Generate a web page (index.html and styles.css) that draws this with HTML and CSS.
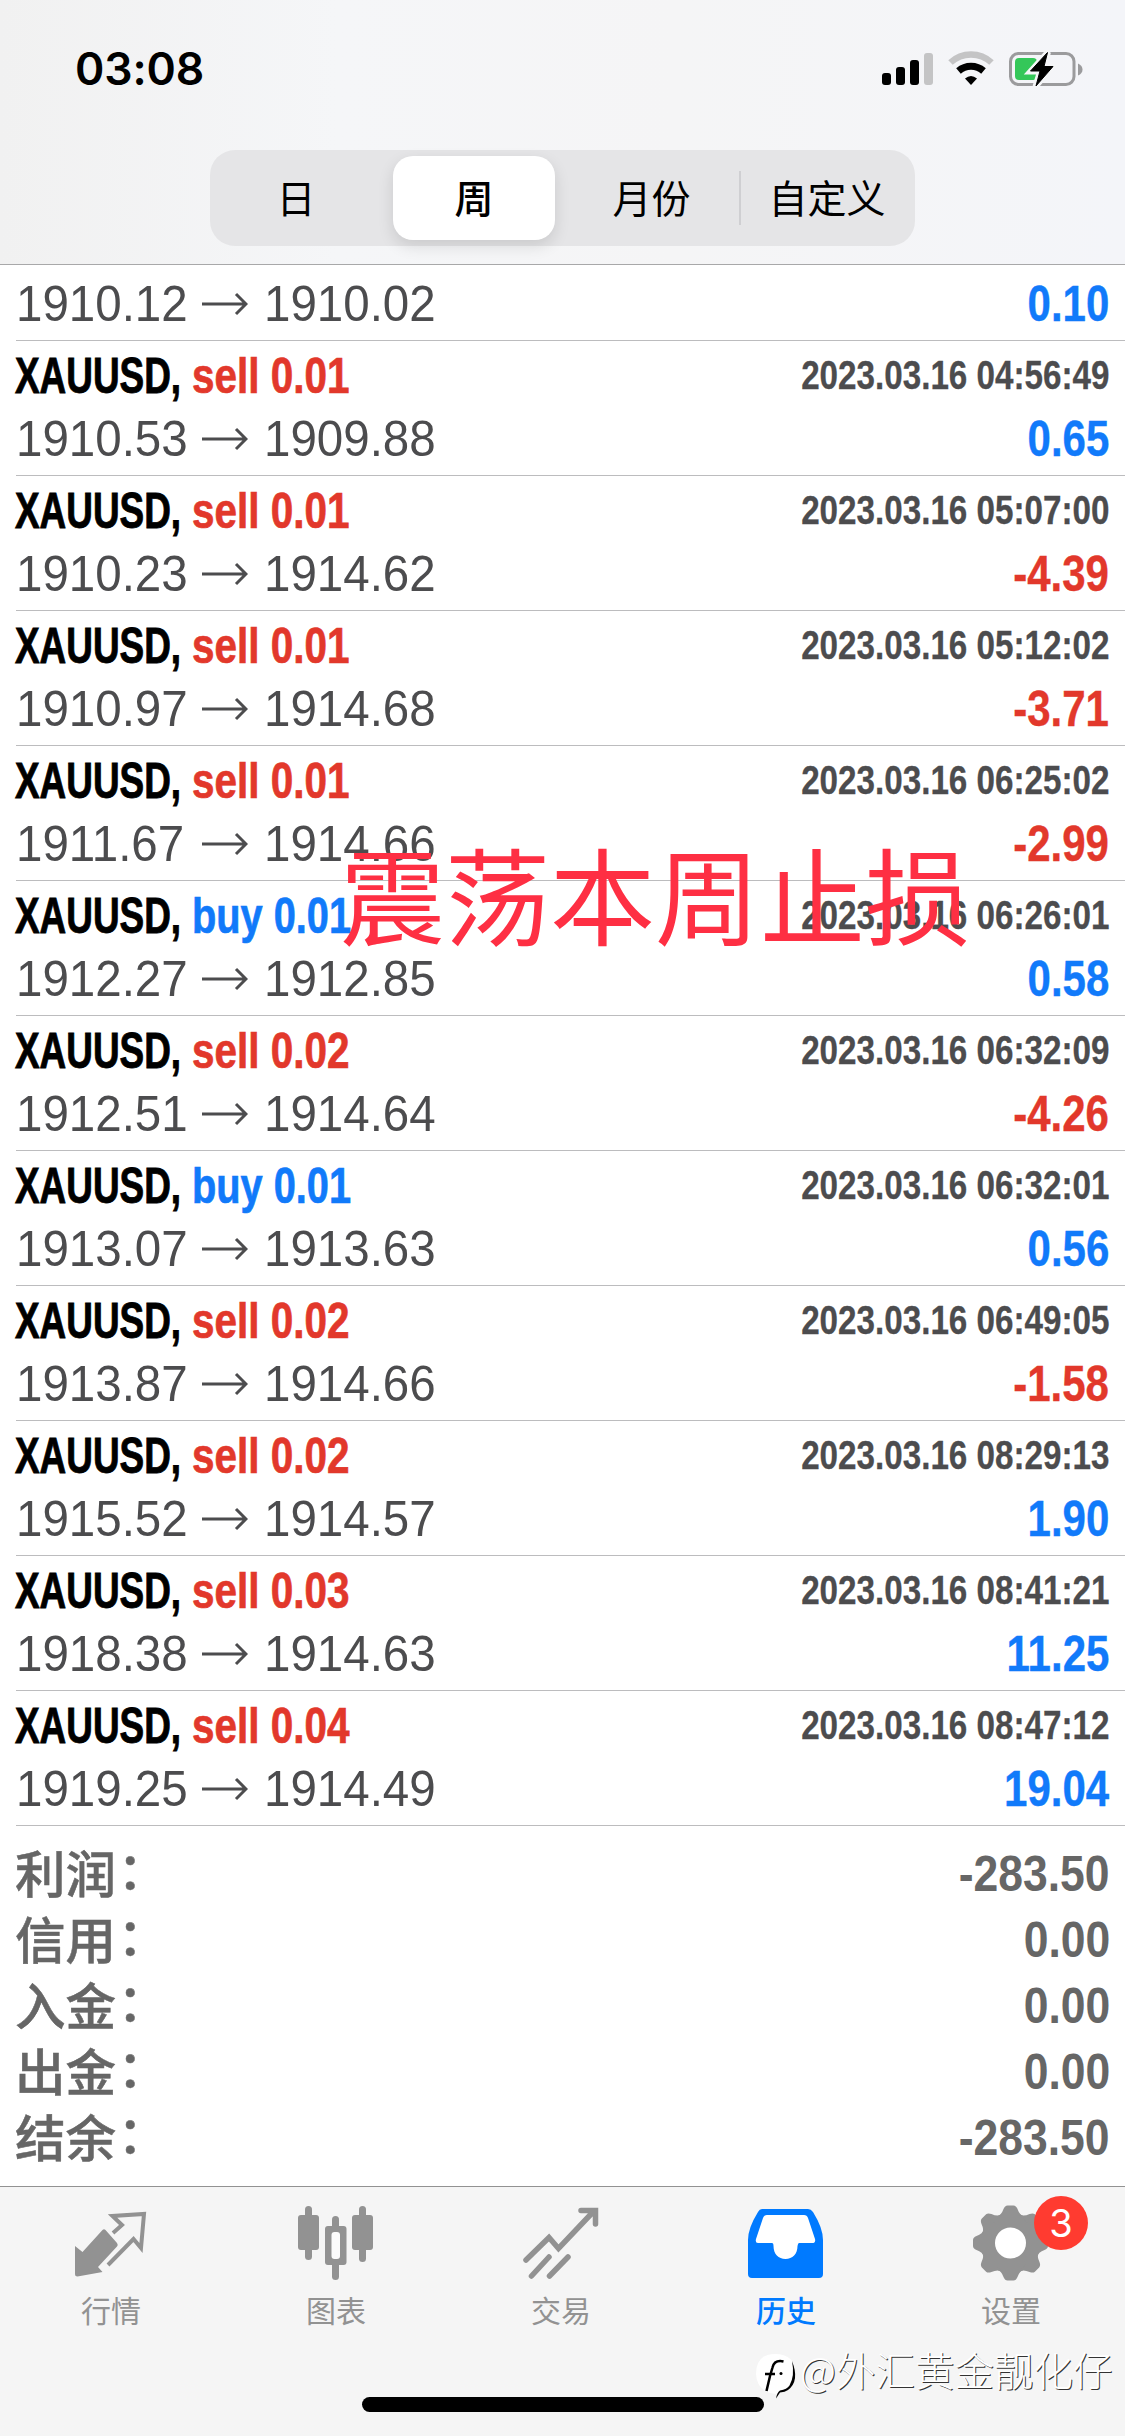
FILE: index.html
```
<!DOCTYPE html>
<html lang="zh-CN">
<head>
<meta charset="utf-8">
<title>历史</title>
<link rel="stylesheet" href="styles.css">
</head>
<body>
<div class="screen">
  <header class="header">
    <div class="status">
      <span class="clock">03:08</span>
      <svg class="indicators" width="206" height="40" viewBox="0 0 206 40">
        <rect x="2" y="23" width="9" height="12" rx="3"/>
        <rect x="16" y="17" width="9" height="18" rx="3"/>
        <rect x="30" y="10" width="9" height="25" rx="3"/>
        <rect x="44" y="3" width="9" height="32" rx="3" fill="#c4c4c5"/>
        <path d="M70.5 12.5a30 30 0 0 1 41 0" fill="none" stroke="#c4c4c5" stroke-width="6.5"/>
        <path d="M78.500 21a19 19 0 0 1 25 0" fill="none" stroke="#000" stroke-width="7"/>
        <path d="M85 28.500q6-5 12 0l-6 6.500z"/>
        <rect x="130.500" y="3.500" width="63.500" height="31" rx="8" fill="none" stroke="#9b9b9d" stroke-width="3"/>
        <rect x="135" y="8" width="22" height="22" rx="4" fill="#34c759"/>
        <path d="M198 13.500q4.500 2 4.500 6t-4.500 6z" fill="#9b9b9d"/>
        <path d="M168 2l-17.500 19.500h9.500l-4.500 15 17.500-20h-9z" stroke="#f5f6f8" stroke-width="6"/>
        <path d="M167.500 2.500l-17 18.500h9.500l-4 15 17-19.500h-9z" stroke="#000"/>
      </svg>
    </div>
    <nav class="segments">
      <span class="segment day">日</span>
      <span class="segment active">周</span>
      <span class="segment month">月份</span>
      <span class="segment divided">自定义</span>
    </nav>
  </header>

  <main class="history">
    <ul class="deals" id="deals"></ul>
    <dl class="totals">
      <div><dt>利润<i>：</i></dt><dd>-283.50</dd></div>
      <div><dt>信用<i>：</i></dt><dd>0.00</dd></div>
      <div><dt>入金<i>：</i></dt><dd>0.00</dd></div>
      <div><dt>出金<i>：</i></dt><dd>0.00</dd></div>
      <div><dt>结余<i>：</i></dt><dd>-283.50</dd></div>
    </dl>
    <div class="caption">震荡本周止损</div>
  </main>

  <footer class="tabbar">
    <div class="tab">
      <svg width="80" height="80" viewBox="0 0 80 80">
        <path d="M31.500 28q1.500-1.500 3 0L46 41q1.500 2 0 3.500L27 65l4.500 5-25 4.500q-2.500 0-2.500-2.500V44l7.500 6z"/>
        <path d="M42 31l9-8-9.500-9L73 12l-3 34-7.500-9L37 63" fill="none" stroke="#929292" stroke-width="4"/>
      </svg>
      <span>行情</span>
    </div>
    <div class="tab">
      <svg width="80" height="80" viewBox="0 0 80 80">
        <rect x="2" y="13" width="21" height="35" rx="3"/><rect x="9" y="4" width="7" height="54" rx="3.500"/>
        <rect x="56" y="13" width="21" height="35" rx="3"/><rect x="63" y="4" width="7" height="56" rx="3.500"/>
        <rect x="36" y="14" width="7" height="64" rx="3.500"/><rect x="29" y="24" width="21.500" height="39" rx="3"/>
        <rect x="35.500" y="30" width="8.500" height="27" rx="3" fill="#fbfbfb"/>
      </svg>
      <span>图表</span>
    </div>
    <div class="tab">
      <svg width="80" height="80" viewBox="0 0 80 80">
        <path d="M5 58l23-22.500 9.500 11L72 10M60 8.500h14.500V22M10.500 74L28 55M28.500 74L47 55" fill="none" stroke="#929292" stroke-width="5.500" stroke-linecap="round"/>
      </svg>
      <span>交易</span>
    </div>
    <div class="tab current">
      <svg width="80" height="80" viewBox="0 0 80 80">
        <path d="M16 7h46q3 0 5 3 10 16 10 28v34q0 4-4 4H6q-4 0-4-4V38Q2 26 12 10q1.500-3 4-3z"/>
        <path d="M21 13h37q3 0 4 3l7 21q1 4-3 4H53q-1 0-1.500 3c0 8-5 13-12 13s-12-5-12-13q0-3-1.500-3H12q-3 0-2-4l7-21q1-3 4-3z" fill="#fff"/>
      </svg>
      <span>历史</span>
    </div>
    <div class="tab">
      <svg width="80" height="80" viewBox="0 0 80 80">
        <g transform="translate(39.500 41)">
          <circle r="30"/>
          <path id="tooth" d="M-14-26Q-9-28-7-34q1.500-3.500 4-3.500h6q2.500 0 4 3.500 2 6 7 8z"/>
          <use href="#tooth" transform="rotate(45)"/><use href="#tooth" transform="rotate(90)"/><use href="#tooth" transform="rotate(135)"/><use href="#tooth" transform="rotate(180)"/><use href="#tooth" transform="rotate(225)"/><use href="#tooth" transform="rotate(270)"/><use href="#tooth" transform="rotate(315)"/>
          <circle r="15.500" fill="#fff"/>
        </g>
      </svg>
      <b class="badge">3</b>
      <span>设置</span>
    </div>
    <div class="home"></div>
    <div class="credit">
      <svg width="46" height="50" viewBox="0 0 46 50">
        <path d="M20 2q20 0 20 19 0 16-19 21-19-2-20-20Q1 2 20 2z" fill="#fff"/>
        <path d="M37 9q8 20-4 29-3 2-8 2.500l-4 6q1-6 4-8 7-1 9.500-5Q40 24 37 9z" fill="#000"/>
        <path d="M28.500 9.500q-9-2-11 6L15 24l-3.500 15M10 22h10" fill="none" stroke="#000" stroke-width="2.500"/>
        <circle cx="26" cy="21.500" r="1.500"/>
      </svg>
      <span>@外汇黄金靓化仔</span>
    </div>
  </footer>
</div>
<script src="deals.js"></script>
</body>
</html>
```
FILE: styles.css
```
* { box-sizing: border-box; }
body {
  margin: 0;
  background: #fff;
  font-family: "Liberation Sans", "Noto Sans CJK SC", sans-serif;
}
.screen {
  width: 1125px;
  height: 2436px;
  display: flex;
  flex-direction: column;
  overflow: hidden;
  position: relative;
}

/* Header */
.header {
  height: 265px;
  flex: none;
  background: linear-gradient(90deg, #f1f1f1, #f5f6f8 30%, #f5f5f6 60%, #f4f5f9);
  border-bottom: 1px solid #a8a8a9;
}
.status {
  height: 150px;
  display: flex;
  justify-content: space-between;
  padding: 50px 39px 0 75px;
}
.clock {
  font: 600 44.500px/38px Inter, sans-serif;
  letter-spacing: -0.1px;
}
.segments {
  width: 705px;
  height: 96px;
  margin-left: 210px;
  padding: 6px;
  display: grid;
  grid-template-columns: 177px 162px 184px 1fr;
  border-radius: 25px;
  background: #e5e5e7;
}
.segment {
  display: flex;
  align-items: center;
  justify-content: center;
  font: 400 39px/1 "Noto Sans CJK SC", sans-serif;
  color: #000;
  position: relative;
  padding-bottom: 3px;
}
.segment.day { padding-right: 17px; }
.segment.month { padding-left: 9px; }
.segment.divided { padding-left: 6px; }
.segment.active {
  background: #fff;
  border-radius: 20px;
  font-weight: 500;
  box-shadow: 0 6px 16px rgba(0, 0, 0, .12);
}
.segment.divided::before {
  content: "";
  position: absolute;
  left: 0;
  top: 15px;
  width: 2px;
  height: 54px;
  background: #cfcfd2;
}

/* Deals */
.history { flex: none; height: 1921px; position: relative; }
.deals { list-style: none; margin: 0 0 0 16px; padding: 0; }
.deal {
  height: 135px;
  border-bottom: 1px solid #bcbcbe;
  padding-top: 3px;
}
.deal.partial { height: 76px; padding-top: 7px; }
.line {
  display: flex;
  height: 64px;
  align-items: center;
  line-height: 64px;
  white-space: nowrap;
  padding-right: 16px;
}
.line + .line { margin-top: -1px; }
.line > * { transform-origin: 0 50%; }
.symbol, .side { font-size: 50px; font-weight: 700; height: 64px; }
.symbol { width: 177px; margin-left: -1px; transform: scaleX(.738); -webkit-text-stroke: .9px currentColor; }
.side { transform: scaleX(.81); -webkit-text-stroke: .7px currentColor; }
.side.blue { transform: scaleX(.795); }
.time {
  margin-left: auto;
  padding-bottom: 2px;
  font-size: 40px;
  font-weight: 700;
  color: #4c4c4e;
  transform: scaleX(.83);
  -webkit-text-stroke: .3px currentColor;
}
.line > .time, .line > .result { transform-origin: 100% 50%; }
.price { width: 186px; font-size: 50px; color: #4c4c4e; transform: scaleX(.95); }
.arrow { width: 46px; height: 24px; margin-right: 16px; }
.result { margin-left: auto; font-size: 50px; font-weight: 700; transform: scaleX(.84); -webkit-text-stroke: .4px currentColor; }
.red { color: #e2382b; }
.blue { color: #117afa; }

/* Totals */
.totals { margin: 15px 15px 0 16px; }
.totals div {
  height: 66px;
  display: flex;
  justify-content: space-between;
  color: #666;
  line-height: 67px;
}
dt { font: 500 50.500px/60px "Noto Sans CJK SC", sans-serif; margin-left: -1px; -webkit-text-stroke: .5px currentColor; }
dt i {
  font-family: "Noto Sans CJK JP", sans-serif;
  font-style: normal;
  margin-left: -11px;
  display: inline-block;
  transform: translateY(-1px);
}
dd {
  margin: 0;
  font-size: 50px;
  font-weight: 700;
  transform: scaleX(.89);
  transform-origin: 100% 50%;
}
.caption {
  position: absolute;
  left: 340px;
  top: 546px;
  font: 400 105px/160px "Noto Sans CJK SC", sans-serif;
  color: #fe2f43;
  white-space: nowrap;
}

/* Tab bar */
.tabbar {
  height: 250px;
  flex: none;
  position: relative;
  border-top: 1px solid #929292;
  background: #f5f5f5;
  display: grid;
  grid-template-columns: repeat(5, 225px);
}
.tab {
  display: flex;
  flex-direction: column;
  align-items: center;
  padding: 15px 3px 0 0;
  position: relative;
  color: #929292;
  fill: #929292;
}
.tab span { font: 400 30px/44px "Noto Sans CJK SC", sans-serif; margin-top: 5px; }
.tab.current { color: #007aff; fill: #007aff; }
.tab.current span { font-weight: 500; }
.badge {
  position: absolute;
  left: 134px;
  top: 9px;
  width: 54px;
  height: 54px;
  border-radius: 50%;
  background: #ff3b30;
  color: #fff;
  font: 400 38px/54px Inter, sans-serif;
  text-align: center;
}
.home {
  position: absolute;
  left: 362px;
  top: 210px;
  width: 402px;
  height: 15px;
  border-radius: 8px;
  background: #000;
}
.credit {
  position: absolute;
  left: 755px;
  top: 165px;
  display: flex;
  white-space: nowrap;
}
.credit span {
  font: 300 39.500px/34px "Noto Sans CJK SC", sans-serif;
  margin-left: -1px;
  color: #fff;
  text-shadow: 1px 1px 0 #333;
}
```
FILE: deals.js
```
const deals = [
  ["", "", "", "1910.12", "1910.02", "0.10"],
  ["sell", "0.01", "04:56:49", "1910.53", "1909.88", "0.65"],
  ["sell", "0.01", "05:07:00", "1910.23", "1914.62", "-4.39"],
  ["sell", "0.01", "05:12:02", "1910.97", "1914.68", "-3.71"],
  ["sell", "0.01", "06:25:02", "1911.67", "1914.66", "-2.99"],
  ["buy", "0.01", "06:26:01", "1912.27", "1912.85", "0.58"],
  ["sell", "0.02", "06:32:09", "1912.51", "1914.64", "-4.26"],
  ["buy", "0.01", "06:32:01", "1913.07", "1913.63", "0.56"],
  ["sell", "0.02", "06:49:05", "1913.87", "1914.66", "-1.58"],
  ["sell", "0.02", "08:29:13", "1915.52", "1914.57", "1.90"],
  ["sell", "0.03", "08:41:21", "1918.38", "1914.63", "11.25"],
  ["sell", "0.04", "08:47:12", "1919.25", "1914.49", "19.04"]
];

const arrow = '<svg class="arrow" viewBox="0 0 46 24"><path d="M0 12H44M34 2l10 10-10 10" fill="none" stroke="#4c4c4e" stroke-width="3"/></svg>';

document.getElementById("deals").innerHTML = deals.map(([side, lots, time, open, close, result]) => {
  const head = side
    ? `<div class="line"><span class="symbol">XAUUSD,</span><span class="side ${side === "buy" ? "blue" : "red"}">${side} ${lots}</span><span class="time">2023.03.16 ${time}</span></div>`
    : "";
  return `<li class="deal${side ? "" : " partial"}">${head}<div class="line"><span class="price">${open}</span>${arrow}<span class="price">${close}</span><span class="result ${result[0] === "-" ? "red" : "blue"}">${result}</span></div></li>`;
}).join("");
```
